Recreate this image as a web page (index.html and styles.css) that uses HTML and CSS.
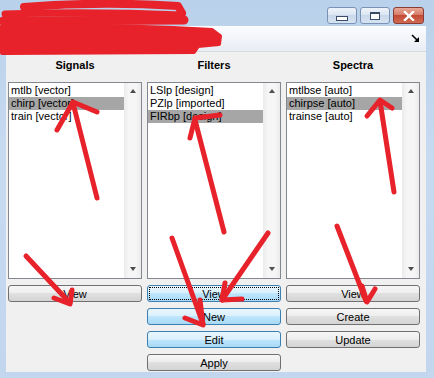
FILE: index.html
```html
<!DOCTYPE html>
<html lang="en">
<head>
    <meta charset="UTF-8">
    <meta name="viewport" content="width=device-width, initial-scale=1.0">
    <title>Filter Manager</title>
    <link rel="stylesheet" href="styles.css">
</head>
<body>
    <div class="window">
        <div class="titlebar">
            <div class="caption-buttons">
                <span class="cap-btn cap-min"><span class="glyph-min"></span></span>
                <span class="cap-btn cap-max"><span class="glyph-max"></span></span>
                <span class="cap-btn cap-close">
                    <svg width="12" height="10" viewBox="0 0 12 10"><path d="M2 1 L10 9 M10 1 L2 9" stroke="#fff" stroke-width="2.4" stroke-linecap="square"/></svg>
                </span>
            </div>
        </div>
        <div class="client">
            <div class="toolbar">
                <svg class="dock" width="9" height="9" viewBox="0 0 9 9"><path d="M1 1 L7 7" stroke="#000" stroke-width="1.6"/><path d="M8 3 L8 8 L3 8 Z" fill="#000"/></svg>
            </div>
            <div class="panels">
                <!-- Signals -->
                <section class="panel">
                    <h2>Signals</h2>
                    <div class="listbox">
                        <ul class="items">
                            <li>mtlb [vector]</li>
                            <li class="selected">chirp [vector]</li>
                            <li>train [vector]</li>
                        </ul>
                        <div class="scrollbar"><span class="arrow-up"></span><span class="arrow-down"></span></div>
                    </div>
                    <div class="buttons">
                        <button class="btn">View</button>
                    </div>
                </section>
                <!-- Filters -->
                <section class="panel">
                    <h2>Filters</h2>
                    <div class="listbox">
                        <ul class="items">
                            <li>LSlp [design]</li>
                            <li>PZlp [imported]</li>
                            <li class="selected">FIRbp [design]</li>
                        </ul>
                        <div class="scrollbar"><span class="arrow-up"></span><span class="arrow-down"></span></div>
                    </div>
                    <div class="buttons">
                        <button class="btn btn-blue btn-focus"><span>View</span></button>
                        <button class="btn btn-blue">New</button>
                        <button class="btn btn-blue">Edit</button>
                        <button class="btn">Apply</button>
                    </div>
                </section>
                <!-- Spectra -->
                <section class="panel">
                    <h2>Spectra</h2>
                    <div class="listbox">
                        <ul class="items">
                            <li>mtlbse [auto]</li>
                            <li class="selected">chirpse [auto]</li>
                            <li>trainse [auto]</li>
                        </ul>
                        <div class="scrollbar"><span class="arrow-up"></span><span class="arrow-down"></span></div>
                    </div>
                    <div class="buttons">
                        <button class="btn">View</button>
                        <button class="btn">Create</button>
                        <button class="btn">Update</button>
                    </div>
                </section>
            </div>
        </div>

        <!-- red marks drawn over the screenshot -->
        <svg class="marks" width="434" height="378" viewBox="0 0 434 378">
            <g fill="#e8222a" stroke="#e8222a" stroke-linecap="round" stroke-linejoin="round">
                <path fill="none" stroke-width="8" d="M24 7 Q100 1 178 6 L182 13"/>
                <path fill="none" stroke-width="7" d="M5 14 Q90 11 182 15"/>
                <path fill="none" stroke-width="9" d="M3 21 L184 20"/>
                <path stroke-width="4" d="M2 26 Q110 24 212 30 L220 36 L219 44 L198 46 L194 52 L2 53 Z"/>
            </g>
            <g fill="none" stroke="#e8222a" stroke-width="5" stroke-linecap="round" stroke-linejoin="round">
                <path d="M97 198 L73 103"/>
                <path d="M57 130 L73 102 L97 112"/>
                <path d="M26 256 L70 303"/>
                <path d="M54 298 L70 304 L72 290"/>
                <path d="M224 232 L195 120"/>
                <path d="M190 138 L195 118 L220 115"/>
                <path d="M172 238 L203 324"/>
                <path d="M185 318 L203 325 L200 300"/>
                <path d="M268 233 L222 300"/>
                <path d="M242 299 L222 300 L225 283"/>
                <path d="M394 192 L380 101"/>
                <path d="M367 116 L380 100 L392 108"/>
                <path d="M337 226 L366 301"/>
                <path d="M362 286 L367 302 L375 289"/>
            </g>
        </svg>
    </div>
</body>
</html>
```

FILE: styles.css
```css
body {
    margin: 0;
    padding: 0;
    font-family: "Liberation Sans", Arial, sans-serif;
    font-size: 11px;
    background-color: #bcd3ea;
}

.window {
    position: relative;
    width: 434px;
    height: 378px;
    background: linear-gradient(#b9d1ea, #c6daf0 40%, #c2d7ee);
    overflow: hidden;
}

.titlebar {
    height: 26px;
    display: flex;
    justify-content: flex-end;
    align-items: flex-start;
    padding-right: 10px;
    box-sizing: border-box;
}

.caption-buttons {
    display: flex;
    gap: 3px;
    margin-top: 7px;
}

.cap-btn {
    width: 30px;
    height: 17px;
    box-sizing: border-box;
    border: 1px solid #7a93b4;
    border-radius: 3px;
    background: linear-gradient(#eef3fa, #dae5f2 50%, #c9d8eb 50%, #d6e3f1);
    display: flex;
    align-items: center;
    justify-content: center;
}

.cap-close {
    width: 31px;
    border-color: #8a3b33;
    background: linear-gradient(#e8a898, #d47866 50%, #c34a35 50%, #d06a52);
}

.glyph-min {
    width: 10px;
    height: 3px;
    margin-top: 5px;
    border: 1px solid #3b4d66;
    background: #fff;
}

.glyph-max {
    width: 8px;
    height: 5px;
    border: 1px solid #3b4d66;
    border-top-width: 2px;
    background: #fff;
}

.client {
    margin: 0 8px 0 6px;
    height: 346px;
    background-color: #f0f0f0;
}

.toolbar {
    height: 25px;
    border-bottom: 1px solid #d5dbe3;
    background: linear-gradient(#fbfcfe, #e9edf4);
    display: flex;
    justify-content: flex-end;
    align-items: center;
    padding-right: 6px;
}

.panels {
    display: grid;
    grid-template-columns: repeat(3, 134px);
    gap: 5px;
    padding-left: 2px;
}

.panel h2 {
    margin: 0;
    height: 30px;
    line-height: 26px;
    text-align: center;
    font-size: 11px;
    font-weight: bold;
    color: #000;
}

.listbox {
    height: 197px;
    box-sizing: border-box;
    border: 1px solid #828790;
    background: #fff;
    display: flex;
}

.items {
    flex: 1;
    list-style: none;
    margin: 0;
    padding: 1px 0 0;
}

.items li {
    height: 13px;
    line-height: 13px;
    padding-left: 2px;
    color: #000;
    white-space: nowrap;
}

.items li.selected {
    background-color: #a6a6a6;
}

.scrollbar {
    width: 17px;
    background: linear-gradient(90deg, #ebebeb, #f6f6f6 30%, #f6f6f6 70%, #ebebeb);
    display: flex;
    flex-direction: column;
    justify-content: space-between;
    align-items: center;
    padding: 6px 0 7px;
    box-sizing: border-box;
}

.arrow-up, .arrow-down {
    width: 0;
    height: 0;
    border-left: 3.5px solid transparent;
    border-right: 3.5px solid transparent;
}

.arrow-up {
    border-bottom: 4px solid #4d4d4d;
}

.arrow-down {
    border-top: 4px solid #4d4d4d;
}

.buttons {
    display: flex;
    flex-direction: column;
    gap: 6px;
    margin-top: 6px;
}

.btn {
    height: 17px;
    padding: 0;
    box-sizing: border-box;
    border: 1px solid #707070;
    border-radius: 3px;
    background: linear-gradient(#f6f6f6, #ededed 50%, #e0e0e0 50%, #d4d4d4);
    font-family: "Liberation Sans", Arial, sans-serif;
    font-size: 11px;
    color: #000;
    display: flex;
    align-items: center;
    justify-content: center;
}

.btn-blue {
    border-color: #3c7fb1;
    background: linear-gradient(#eaf6fd, #d9f0fc 50%, #bee6fd 50%, #a7d9f5);
}

.btn-focus {
    padding: 1px;
}

.btn-focus span {
    flex: 1;
    align-self: stretch;
    display: flex;
    align-items: center;
    justify-content: center;
    border: 1px dotted #000;
}

.marks {
    position: absolute;
    top: 0;
    left: 0;
    pointer-events: none;
}
```
